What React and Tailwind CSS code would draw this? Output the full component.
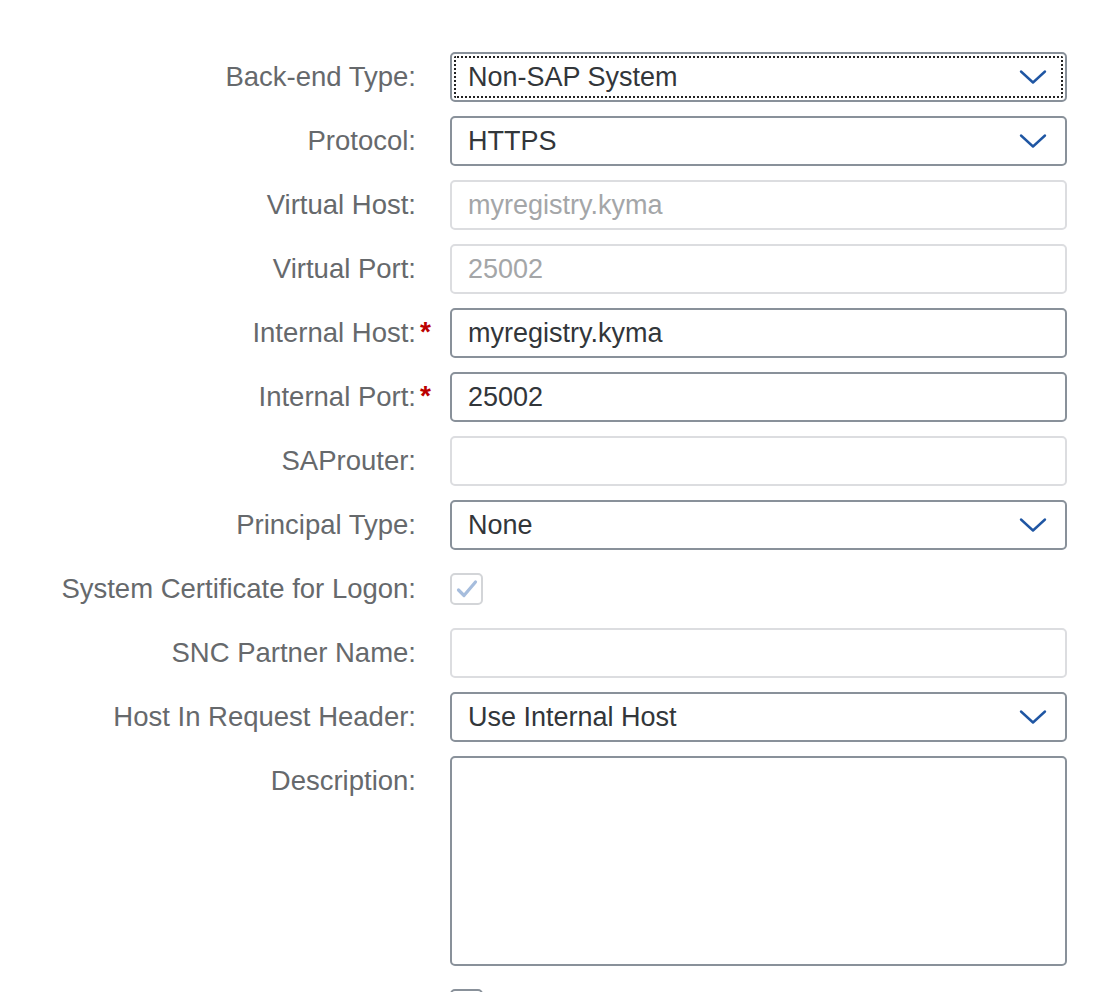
import React from 'react';

const font = { fontFamily: '"Liberation Sans", Arial, sans-serif' };

function Chevron() {
    return (
        <svg width="28" height="16" viewBox="0 0 28 16" fill="none" className="shrink-0">
            <path d="M2 2.5 L14 13.5 L26 2.5" stroke="#1f56a3" strokeWidth="2.4" strokeLinecap="round" strokeLinejoin="round" />
        </svg>
    );
}

function Row({ label, required, top, children }) {
    return (
        <div className={`flex gap-[34px] ${top ? 'items-start' : 'items-center'}`}>
            <div className={`w-[416px] shrink-0 flex justify-end text-[27.5px] text-[#66696c] ${top ? 'h-[50px] items-center' : 'items-center'}`}>
                <span className="relative">
                    {label}
                    {required && (
                        <span className="absolute left-full top-[6px] ml-[4px] text-[#bb0000] font-bold text-[28px] leading-none">*</span>
                    )}
                </span>
            </div>
            <div className="w-[617px] shrink-0">{children}</div>
        </div>
    );
}

function Select({ value, focused }) {
    return (
        <div className="h-[50px] border-2 border-[#89919a] rounded-[5px] bg-white relative flex items-center pl-[16px] pr-[18px] text-[#32363a]">
            {focused && <div className="absolute inset-[2px] border-2 border-dotted border-[#222] rounded-[2px] pointer-events-none" />}
            <span className="flex-1">{value}</span>
            <Chevron />
        </div>
    );
}

function Input({ value, disabled }) {
    return (
        <div className={`h-[50px] border-2 rounded-[5px] bg-white flex items-center pl-[16px] ${disabled ? 'border-[#dcdde0] text-[#a4a6a8]' : 'border-[#89919a] text-[#32363a]'}`}>
            {value}
        </div>
    );
}

function Checkbox({ checked, disabled }) {
    return (
        <div className={`w-[33px] h-[32px] border-2 rounded-[5px] bg-white flex items-center justify-center ${disabled ? 'border-[#d3d5d8]' : 'border-[#89919a]'}`}>
            {checked && (
                <svg width="22" height="20" viewBox="0 0 22 20" fill="none">
                    <path d="M2.5 11 L8 16.5 L19.5 3" stroke="#a6bddd" strokeWidth="3.2" strokeLinecap="round" strokeLinejoin="round" />
                </svg>
            )}
        </div>
    );
}

export default function App() {
    return (
        <div className="w-[1096px] h-[992px] bg-white overflow-hidden text-[27px]" style={font}>
            <div className="pt-[52px] flex flex-col gap-[14px]">
                <Row label="Back-end Type:"><Select value="Non-SAP System" focused /></Row>
                <Row label="Protocol:"><Select value="HTTPS" /></Row>
                <Row label="Virtual Host:"><Input value="myregistry.kyma" disabled /></Row>
                <Row label="Virtual Port:"><Input value="25002" disabled /></Row>
                <Row label="Internal Host:" required><Input value="myregistry.kyma" /></Row>
                <Row label="Internal Port:" required><Input value="25002" /></Row>
                <Row label="SAProuter:"><Input value="" disabled /></Row>
                <Row label="Principal Type:"><Select value="None" /></Row>
                <Row label="System Certificate for Logon:">
                    <div className="h-[50px] flex items-center"><Checkbox checked disabled /></div>
                </Row>
                <Row label="SNC Partner Name:"><Input value="" disabled /></Row>
                <Row label="Host In Request Header:"><Select value="Use Internal Host" /></Row>
                <Row label="Description:" top>
                    <div className="h-[210px] border-2 border-[#89919a] rounded-[5px] bg-white" />
                </Row>
                <Row label="Check Internal Host:">
                    <div className="h-[50px] flex items-center"><Checkbox /></div>
                </Row>
            </div>
        </div>
    );
}
